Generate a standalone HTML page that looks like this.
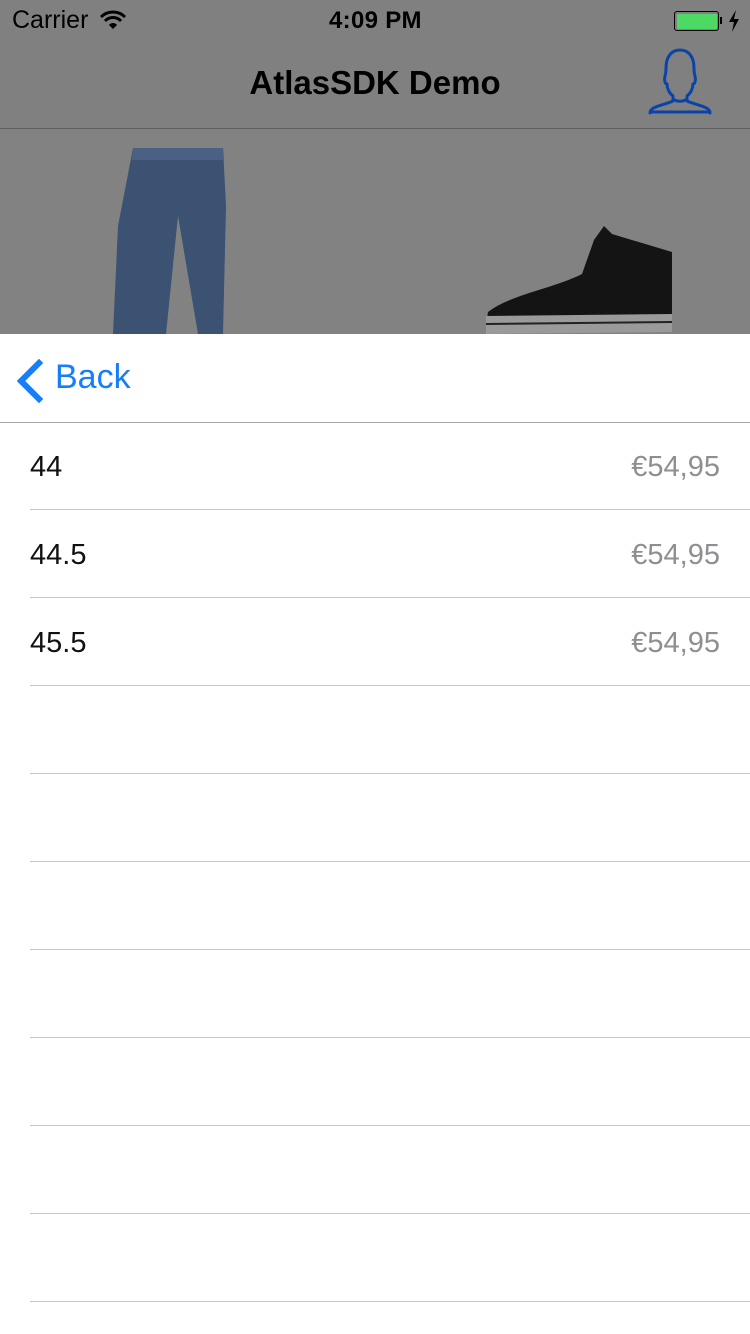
<!DOCTYPE html>
<html><head><meta charset="utf-8"><style>
html,body{margin:0;padding:0;width:750px;height:1334px;overflow:hidden;font-family:"Liberation Sans",sans-serif;}
.top{position:absolute;left:0;top:0;width:750px;height:334px;background:#828282;}
.nav{position:absolute;left:0;top:0;width:750px;height:128px;background:#808080;border-bottom:1px solid #5f5f5f;}
.st{position:absolute;top:6px;font-size:25px;color:#000;}
.title{position:absolute;top:64px;width:750px;text-align:center;font-size:33px;font-weight:bold;color:#000;}
.sheet{position:absolute;left:0;top:334px;width:750px;height:1000px;background:#fff;}
.back{position:absolute;left:55px;top:24px;font-size:34px;color:#157efb;}
.hsep{position:absolute;left:0;top:88px;width:750px;height:1px;background:#a8a8a8;}
.row{position:absolute;left:30px;width:720px;height:88px;border-bottom:1px solid #c8c7cc;}
.row .l{position:absolute;left:0;top:30px;font-size:29px;color:#111;}
.row .r{position:absolute;right:30px;top:30px;font-size:29px;color:#8e8e93;}
</style></head><body>
<div class="top">
<div class="nav">
<div class="st" style="left:12px">Carrier</div>
<svg style="position:absolute;left:99px;top:10px" width="28" height="20" viewBox="0 0 28 20"><path d="M2 7 A17 17 0 0 1 26 7" stroke="#000" stroke-width="3" fill="none"/><path d="M6 11 A11 11 0 0 1 22 11" stroke="#000" stroke-width="3" fill="none"/><path d="M10 15 A5 5 0 0 1 18 15 L14 19Z" fill="#000"/></svg>
<div class="st" style="left:329px;font-weight:bold;font-size:24px;top:7px;letter-spacing:0.3px;font-weight:600">4:09 PM</div>
<div style="position:absolute;left:674px;top:11px;width:43px;height:18px;border:1.5px solid #000;border-radius:3px;"><div style="margin:1.5px;height:15px;background:#4cd964;border-radius:1px"></div></div>
<div style="position:absolute;left:720px;top:17px;width:2px;height:7px;background:#000"></div>
<svg style="position:absolute;left:727px;top:10px" width="14" height="22" viewBox="0 0 14 22"><path d="M9 0 L2 12 L7 12 L5 22 L12 9 L7 9Z" fill="#000"/></svg>
<div class="title">AtlasSDK Demo</div>
<svg style="position:absolute;left:640px;top:40px" width="80" height="80" viewBox="0 0 80 80"><path d="M33 56 C29 53 27 48 27 44 C25 44 24 40 25 36 C26 33 26 32 26 28 C26 16 32 10 40 10 C48 10 54 16 54 28 C54 32 54 33 55 36 C56 40 55 44 53 44 C53 48 51 53 47 56 L47 61 C55 65 70 66 70 73 L70 72 L11 72 L10 73 C10 66 25 65 33 61 Z" stroke="#0b44a8" stroke-width="3" fill="none" stroke-linejoin="round"/><path d="M33 59 C37 62 43 62 47 59" stroke="#0b44a8" stroke-width="3" fill="none"/></svg>
</div>
<svg style="position:absolute;left:108px;top:146px" width="125" height="188" viewBox="0 0 125 188"><path d="M25 2 L115 2 L118 60 L115 188 L90 188 L70 70 L58 188 L5 188 L10 80Z" fill="#3b5272"/><path d="M25 2 L115 2 L116 14 L24 14Z" fill="#4a6184"/></svg>
<svg style="position:absolute;left:482px;top:224px" width="195" height="110" viewBox="0 0 195 110"><path d="M112 16 L122 2 L130 10 L190 28 L190 98 L4 100 L6 88 C30 70 70 65 100 50Z" fill="#141414"/><path d="M4 92 L190 90 L190 108 L4 110Z" fill="#9a9a9a"/><path d="M4 100 L190 98" stroke="#222" stroke-width="2"/></svg>
</div>
<div class="sheet">
<svg style="position:absolute;left:15px;top:25px" width="30" height="44" viewBox="0 0 30 44"><path d="M24 4 L6 22 L24 40" stroke="#157efb" stroke-width="6" fill="none" stroke-linecap="square"/></svg>
<div class="back">Back</div>
<div class="hsep"></div>
<div class="row" style="top:87px"><div class="l">44</div><div class="r">€54,95</div></div>
<div class="row" style="top:175px"><div class="l">44.5</div><div class="r">€54,95</div></div>
<div class="row" style="top:263px"><div class="l">45.5</div><div class="r">€54,95</div></div>
<div class="row" style="top:351px"></div>
<div class="row" style="top:439px"></div>
<div class="row" style="top:527px"></div>
<div class="row" style="top:615px"></div>
<div class="row" style="top:703px"></div>
<div class="row" style="top:791px"></div>
<div class="row" style="top:879px"></div>
</div>
</body></html>
